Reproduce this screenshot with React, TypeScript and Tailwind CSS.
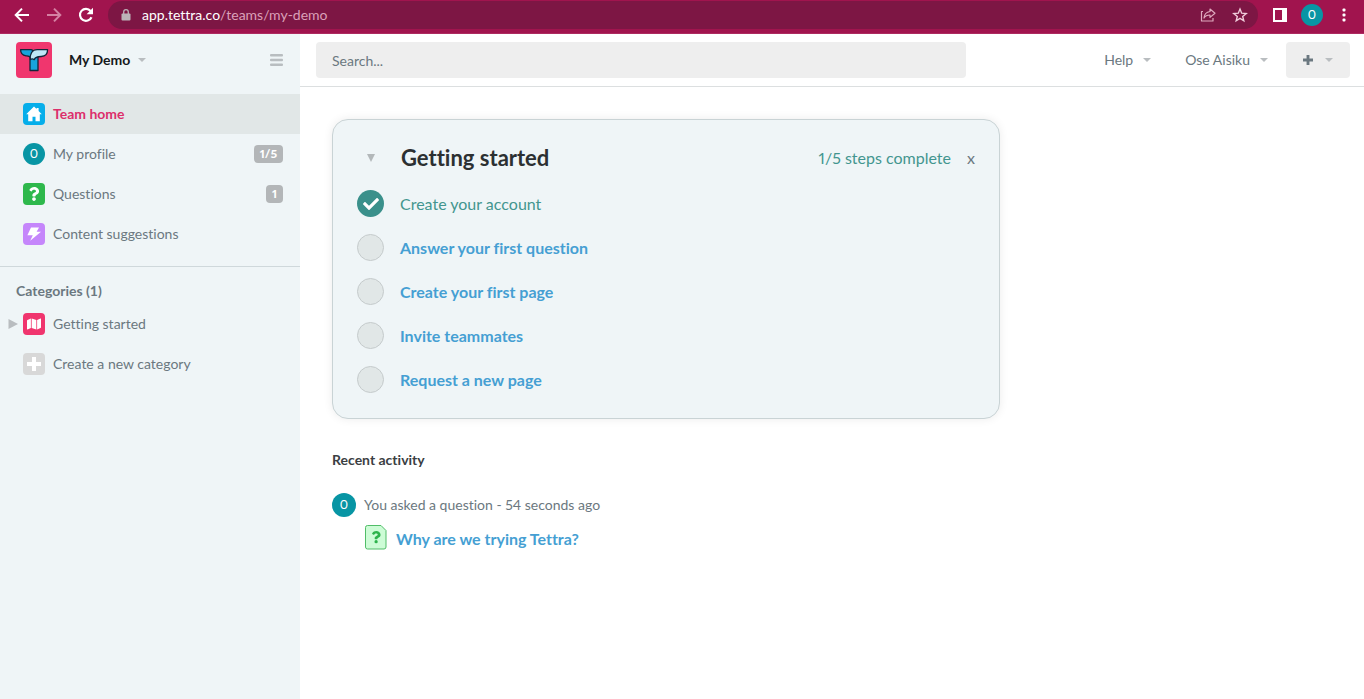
import React, { useState } from 'react';
import { FaCheck, FaMap, FaQuestion } from 'react-icons/fa';

interface Step {
  title: string;
  done: boolean;
}

interface NavItemProps {
  icon: React.ReactNode;
  label: string;
  badge?: string;
  active?: boolean;
  expandable?: boolean;
}

const steps: Step[] = [
  { title: 'Create your account', done: true },
  { title: 'Answer your first question', done: false },
  { title: 'Create your first page', done: false },
  { title: 'Invite teammates', done: false },
  { title: 'Request a new page', done: false },
];

const Caret: React.FC = () => (
  <svg viewBox="0 0 8 4" className="w-2 h-1 fill-[#b9bdc0]" aria-hidden="true">
    <path d="M0 0h8L4 4z" />
  </svg>
);

const PlusIcon: React.FC<{ className: string }> = ({ className }) => (
  <svg viewBox="0 0 14 14" className={className} aria-hidden="true">
    <path d="M5 0h4v5h5v4H9v5H5V9H0V5h5z" />
  </svg>
);

const TettraLogo: React.FC = () => (
  <svg viewBox="0 0 36 36" className="h-9 w-9 shrink-0" role="img" aria-label="Tettra">
    <rect width="36" height="36" rx="4" fill="#f0366e" />
    <g stroke="#14253a" strokeWidth="1.3" strokeLinejoin="round">
      <path d="M14 14.500v14h8V14.500z" fill="#17a3dc" />
      <path d="M4.600 7.600H15c1.500 0 2 1.200 2 2.800L14.600 15.500c-1.200-1.600-2.600-1.500-4.600-1.700C6.600 13.400 4.600 11 4.600 7.600z" fill="#17a3dc" />
      <path d="M14.300 17.500c-.6-6 2-9.900 6.800-9.900h10.500c0 4.400-2.400 6.900-6.400 6.900-3.600 0-6 .3-7 3.200-1-.8-2.600-1-3.900-.2z" fill="#bfe7f8" />
    </g>
  </svg>
);

const HomeIcon: React.FC = () => (
  <svg viewBox="0 0 16 16" className="h-4 w-4 fill-white" aria-hidden="true">
    <path d="M8 .5 .2 8.200h2V15.200h4.300v-4.400h3v4.400h4.300V8.200h2L12.600 5V2h-2v1.100z" />
  </svg>
);

const BrowserBar: React.FC = () => (
  <div className="flex h-[34px] shrink-0 items-start bg-[#a1144e] border-b border-[#ad2a60] px-3 text-white">
    <div className="flex h-[30px] items-center gap-3">
      <button aria-label="Back" className="flex h-5 w-5 items-center justify-center">
        <svg viewBox="0 0 16 16" className="h-4 w-4 fill-none stroke-white" strokeWidth="2">
          <path d="M15 8H2M8 1.600 1.700 8 8 14.400" />
        </svg>
      </button>
      <button aria-label="Forward" className="flex h-5 w-5 items-center justify-center">
        <svg viewBox="0 0 16 16" className="h-4 w-4 fill-none stroke-[#d581a3]" strokeWidth="2">
          <path d="M1 8h13M8 1.600 14.300 8 8 14.400" />
        </svg>
      </button>
      <button aria-label="Reload" className="flex h-5 w-5 items-center justify-center">
        <svg viewBox="0 0 16 16" className="h-4 w-4">
          <path d="M13.500 10.200A6 6 0 1 1 12.600 4" fill="none" stroke="white" strokeWidth="2.200" />
          <path d="M15 .8v6.400H8.600z" fill="white" />
        </svg>
      </button>
    </div>
    <div className="ml-3 mt-px flex h-7 flex-1 items-center rounded-full bg-[#7d1644] pl-[13px] pr-[10px]">
      <svg viewBox="0 0 10 12" className="mr-[11px] h-3 w-[10px]" aria-hidden="true">
        <rect x="0.500" y="4.500" width="9" height="7" rx="1" fill="#bcb3b8" />
        <path d="M2.700 5V3a2.300 2.300 0 0 1 4.600 0v2" fill="none" stroke="#bcb3b8" strokeWidth="1.300" />
      </svg>
      <p className="flex-1 text-sm text-[#dba0b8]">
        <span className="text-white">app.tettra.co</span>/teams/my-demo
      </p>
      <div className="flex items-center gap-4">
        <button aria-label="Share">
          <svg viewBox="0 0 16 16" className="h-4 w-4 fill-none stroke-[#dfa9be]" strokeWidth="1.200" strokeLinejoin="round">
            <path d="M3 4.500H1.500V14h11.500v-3M10 2l5 4.200-5 4.200V8C7.200 8 5.300 8.800 4 11c.3-3.600 2.300-6 6-6.500z" />
          </svg>
        </button>
        <button aria-label="Bookmark">
          <svg viewBox="0 0 16 16" className="h-4 w-4 fill-none stroke-[#f0cddb]" strokeWidth="1.400">
            <path d="m8 2 1.700 4.200 4.500.3-3.500 2.900 1.100 4.400L8 11.400l-3.800 2.400 1.100-4.400-3.500-2.900 4.500-.3z" />
          </svg>
        </button>
      </div>
    </div>
    <div className="flex h-[30px] items-center">
      <button aria-label="Side panel" className="ml-[15px]">
        <svg viewBox="0 0 14 14" className="h-[14px] w-[14px]">
          <path d="M0 0h14v14H0zM2 2v10h7V2z" fill="white" fillRule="evenodd" />
        </svg>
      </button>
      <button className="ml-[14px] flex h-[22px] w-[22px] items-center justify-center rounded-full bg-[#0895a4] font-['Roboto',sans-serif] text-xs">
        O
      </button>
      <button aria-label="Menu" className="ml-[13px] flex w-4 justify-center">
        <svg viewBox="0 0 4 14" className="h-[14px] w-1 fill-white">
          <rect x=".5" y="0.500" width="3" height="3" rx="1" />
          <rect x=".5" y="5.500" width="3" height="3" rx="1" />
          <rect x=".5" y="10.500" width="3" height="3" rx="1" />
        </svg>
      </button>
    </div>
  </div>
);

const NavItem: React.FC<NavItemProps> = ({ icon, label, badge, active, expandable }) => (
  <a
    href="#"
    className={`flex h-10 items-center pr-[17px] pl-2 text-sm ${active ? 'bg-[#e1e7e7] font-bold text-[#dc2f6b]' : 'text-[#6b7880]'}`}
  >
    <span className="w-[15px]">
      {expandable && (
        <svg viewBox="0 0 10 10" className="h-[10px] w-[10px] fill-[#b9bdc0]" aria-hidden="true">
          <path d="M0.500 0v10l9.500-5z" />
        </svg>
      )}
    </span>
    {icon}
    <span className="ml-2 flex-1">{label}</span>
    {badge && (
      <span className="rounded-sm bg-[#b3b6b8] px-[6px] text-xs leading-[18px] font-black text-white proportional-nums">{badge}</span>
    )}
  </a>
);

const Sidebar: React.FC = () => (
  <aside className="w-[300px] shrink-0 bg-[#eff5f7]">
    <div className="flex h-[60px] items-center pt-2 pb-4 px-4">
      <TettraLogo />
      <button className="ml-[17px] flex items-center gap-2 text-sm font-bold text-[#16191b]">
        My Demo
        <Caret />
      </button>
      <button aria-label="Toggle sidebar" className="ml-auto">
        <svg viewBox="0 0 14 14" className="h-[14px] w-[14px] fill-[#b8bdc0]">
          <rect y="1" width="13" height="2.500" rx="1" />
          <rect y="5.700" width="13" height="2.500" rx="1" />
          <rect y="10.400" width="13" height="2.500" rx="1" />
        </svg>
      </button>
    </div>
    <nav className="border-b border-[#cfd8db] pb-3">
      <NavItem
        active
        label="Team home"
        icon={<span className="flex h-[22px] w-[22px] items-center justify-center rounded-sm bg-[#06aeea]"><HomeIcon /></span>}
      />
      <NavItem
        label="My profile"
        badge="1/5"
        icon={
          <span className="flex h-[22px] w-[22px] items-center justify-center rounded-full bg-[#0895a4] font-['Roboto',sans-serif] text-xs text-white">
            O
          </span>
        }
      />
      <NavItem
        label="Questions"
        badge="1"
        icon={<span className="flex h-[22px] w-[22px] items-center justify-center rounded-sm bg-[#2eb84c]"><FaQuestion className="h-[14px] w-[14px] text-white" /></span>}
      />
      <NavItem
        label="Content suggestions"
        icon={
          <span className="flex h-[22px] w-[22px] items-center justify-center rounded-sm bg-[#c586fb]">
            <svg viewBox="0 0 14 14" className="h-[14px] w-[14px] fill-white" aria-hidden="true">
              <path d="M4 .5h8L9.600 4.700H14L3.200 13.800l2.600-5.600H.4z" />
            </svg>
          </span>
        }
      />
    </nav>
    <h2 className="px-4 pt-[14px] text-sm font-bold text-[#6b7880]">Categories (1)</h2>
    <nav className="pt-[3px]">
      <NavItem
        expandable
        label="Getting started"
        icon={<span className="flex h-[22px] w-[22px] items-center justify-center rounded-sm bg-[#f0356e]"><FaMap className="h-[14px] w-[14px] text-white" /></span>}
      />
      <NavItem
        label="Create a new category"
        icon={
          <span className="flex h-[22px] w-[22px] items-center justify-center rounded-sm bg-[#d8d8d8]">
            <PlusIcon className="h-[14px] w-[14px] fill-white" />
          </span>
        }
      />
    </nav>
  </aside>
);

const TopBar: React.FC = () => {
  const [query, setQuery] = useState('');

  return (
    <header className="flex h-[53px] items-center border-b border-[#dcdfe0] pl-4 pr-[14px] text-sm text-[#6b7880]">
      <input
        type="search"
        aria-label="Search"
        placeholder="Search..."
        value={query}
        onChange={(e) => setQuery(e.target.value)}
        className="h-9 w-full max-w-[650px] rounded-sm bg-[#eeeeee] px-4 placeholder:text-[#6b7880]"
      />
      <div className="ml-auto flex items-center">
        <button className="flex items-center gap-[10px]">
          Help
          <Caret />
        </button>
        <button className="ml-[34px] flex items-center gap-[10px]">
          Ose Aisiku
          <Caret />
        </button>
        <button aria-label="Create" className="ml-[18px] flex h-9 w-16 items-center justify-center gap-3 rounded-sm bg-[#eeeeee]">
          <PlusIcon className="h-[10px] w-[10px] fill-[#6b7880]" />
          <Caret />
        </button>
      </div>
    </header>
  );
};

const GettingStarted: React.FC = () => (
  <section className="max-w-[668px] rounded-2xl border border-[#c9d3d5] bg-[#eff5f7] px-6 pt-[18px] pb-4 shadow-[0_0_10px_rgba(0,0,0,0.08)]">
    <div className="flex h-10 items-center">
      <button aria-label="Collapse" className="flex w-7 justify-center">
        <svg viewBox="0 0 8 8" className="h-2 w-2 fill-[#b3b8ba]">
          <path d="M0 0h8L4 8z" />
        </svg>
      </button>
      <h1 className="ml-4 pb-[2px] text-[22px] font-bold text-[#2c3032]">Getting started</h1>
      <span className="ml-auto text-[#43958f] proportional-nums">1/5 steps complete</span>
      <button aria-label="Dismiss" className="ml-4 text-[#6b7880]">x</button>
    </div>
    <ul className="pt-1">
      {steps.map((step) => (
        <li key={step.title} className="flex h-11 items-center">
          {step.done ? (
            <span className="mb-px flex h-[27px] w-[27px] items-center justify-center rounded-full bg-[#3a908b]">
              <FaCheck className="h-4 w-4 text-white" />
            </span>
          ) : (
            <span className="mb-px h-[27px] w-[27px] rounded-full border border-[#c5cbcc] bg-[#e1e7e7]" />
          )}
          <a href="#" className={`ml-4 ${step.done ? 'text-[#43958f]' : 'font-bold text-[#459fd3]'}`}>
            {step.title}
          </a>
        </li>
      ))}
    </ul>
  </section>
);

const RecentActivity: React.FC = () => (
  <section className="pt-[31px]">
    <h2 className="text-sm font-bold text-[#3b4043]">Recent activity</h2>
    <div className="mt-[23px] flex items-center text-sm text-[#6b7880]">
      <span className="flex h-6 w-6 items-center justify-center rounded-full bg-[#0895a4] font-['Roboto',sans-serif] text-xs text-white">O</span>
      <p className="ml-2 proportional-nums">You asked a question - 54 seconds ago</p>
    </div>
    <div className="mt-2 flex items-start pl-8">
      <svg viewBox="0 0 24 26" className="h-[26px] w-6" aria-hidden="true">
        <path d="M3.500 .5h13.500l5 5v16.500a2 2 0 0 1-2 2h-16.500a2 2 0 0 1-2-2V2.500a2 2 0 0 1 2-2z" fill="#cdfcd6" stroke="#51bd68" />
        <g transform="translate(7.500 6) scale(.024)">
          <path d="M202 0C122 0 70 33 29 91c-7 11-5 25 5 32l43 33c10 8 25 6 33-4 25-32 44-50 83-50 31 0 69 20 69 49 0 23-19 34-49 51-35 20-82 45-82 107v7c0 13 11 24 24 24h73c13 0 24-11 24-24 0-43 126-45 126-161C378 68 287 0 202 0zM192 374a69 69 0 1 0 0 138 69 69 0 0 0 0-138z" fill="#2eb34c" />
        </g>
      </svg>
      <a href="#" className="ml-2 pt-[2px] font-bold text-[#459fd3]">Why are we trying Tettra?</a>
    </div>
  </section>
);

const App: React.FC = () => {
  return (
    <div className="flex min-h-screen flex-col bg-white font-['Lato',sans-serif] [font-variant-ligatures:none]">
      <BrowserBar />
      <div className="flex flex-1">
        <Sidebar />
        <div className="min-w-0 flex-1">
          <TopBar />
          <main className="px-8 pt-8 pb-8">
            <GettingStarted />
            <RecentActivity />
          </main>
        </div>
      </div>
    </div>
  );
};

export default App;
